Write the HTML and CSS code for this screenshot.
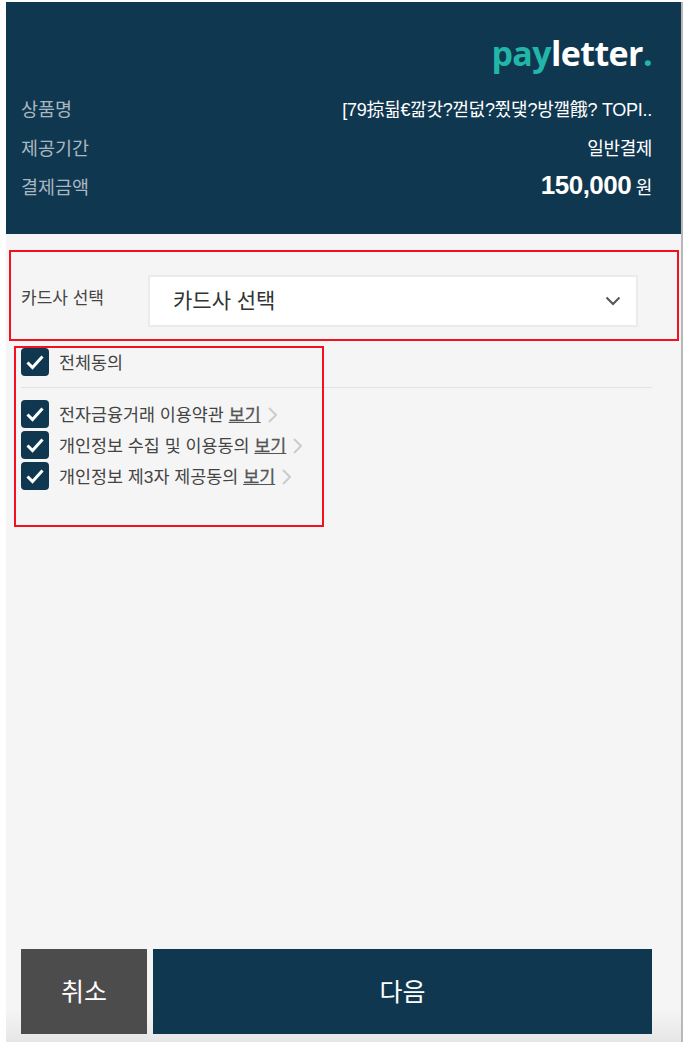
FILE: index.html
```html
<!DOCTYPE html>
<html lang="ko">
<head>
    <meta charset="UTF-8">
    <title>payletter</title>
    <link rel="stylesheet" href="styles.css">
</head>
<body>
<div class="wrap">
    <div class="head">
        <div class="logo"><span class="logo-pay">pay</span>letter<span class="logo-pay">.</span></div>
        <div class="info-row"><span class="info-name">상품명</span><span class="info-value info-long">[79掠뒮€깖캇?껃덦?쮰댗?방깰餓? TOPI..</span></div>
        <div class="info-row"><span class="info-name">제공기간</span><span class="info-value">일반결제</span></div>
        <div class="info-row"><span class="info-name">결제금액</span><span class="info-value"><b class="price">150,000</b> 원</span></div>
    </div>
    <div class="body">
        <div class="card-row">
            <span class="card-label">카드사 선택</span>
            <div class="card-select">
                <span class="card-text">카드사 선택</span>
                <svg class="arrow" width="16" height="10" viewBox="0 0 16 10"><path d="M1.5 1.5 L8 8 L14.5 1.5" fill="none" stroke="#555" stroke-width="2"/></svg>
            </div>
        </div>
        <div class="check-row check-all">
            <svg class="check" viewBox="0 0 28 28"><rect width="28" height="28" rx="4" fill="#103750"/><path d="M6.5 14.5 L11.5 19.5 L21.5 8.5" fill="none" stroke="#fff" stroke-width="3"/></svg>
            <span>전체동의</span>
        </div>
        <div class="terms">
            <div class="check-row">
                <svg class="check" viewBox="0 0 28 28"><rect width="28" height="28" rx="4" fill="#103750"/><path d="M6.5 14.5 L11.5 19.5 L21.5 8.5" fill="none" stroke="#fff" stroke-width="3"/></svg>
                <span>전자금융거래 이용약관 <u class="view">보기</u></span>
                <svg class="more" width="9" height="16" viewBox="0 0 9 16"><path d="M1 1 L8 8 L1 15" fill="none" stroke="#ccc" stroke-width="2"/></svg>
            </div>
            <div class="check-row">
                <svg class="check" viewBox="0 0 28 28"><rect width="28" height="28" rx="4" fill="#103750"/><path d="M6.5 14.5 L11.5 19.5 L21.5 8.5" fill="none" stroke="#fff" stroke-width="3"/></svg>
                <span>개인정보 수집 및 이용동의 <u class="view">보기</u></span>
                <svg class="more" width="9" height="16" viewBox="0 0 9 16"><path d="M1 1 L8 8 L1 15" fill="none" stroke="#ccc" stroke-width="2"/></svg>
            </div>
            <div class="check-row">
                <svg class="check" viewBox="0 0 28 28"><rect width="28" height="28" rx="4" fill="#103750"/><path d="M6.5 14.5 L11.5 19.5 L21.5 8.5" fill="none" stroke="#fff" stroke-width="3"/></svg>
                <span>개인정보 제3자 제공동의 <u class="view">보기</u></span>
                <svg class="more" width="9" height="16" viewBox="0 0 9 16"><path d="M1 1 L8 8 L1 15" fill="none" stroke="#ccc" stroke-width="2"/></svg>
            </div>
        </div>
        <div class="buttons">
            <div class="btn btn-cancel">취소</div>
            <div class="btn btn-next">다음</div>
        </div>
    </div>
    <div class="mark mark-card"></div>
    <div class="mark mark-terms"></div>
</div>
</body>
</html>
```

FILE: styles.css
```css
html, body {
    margin: 0;
    padding: 0;
    background: #fff;
}

body {
    font-family: "Liberation Sans", "Noto Sans CJK KR", sans-serif;
    color: #444;
}

.wrap {
    position: relative;
    width: 677px;
    height: 1040px;
    margin: 2px 0 0 6px;
    display: flex;
    flex-direction: column;
    box-sizing: border-box;
    border-right: 2px solid #b8b8b8;
}

.head {
    height: 232px;
    box-sizing: border-box;
    padding: 33px 29px 0 15px;
    background: #103750;
    color: #fff;
}

.logo {
    height: 53px;
    text-align: right;
    font-family: "Open Sans", sans-serif;
    font-size: 34px;
    line-height: 36px;
    font-weight: 700;
    letter-spacing: -0.6px;
}

.logo-pay {
    color: #22b6a8;
}

.info-row {
    display: flex;
    justify-content: space-between;
    align-items: center;
    height: 39px;
    font-size: 18px;
}

.info-name {
    color: #a9b7c1;
    font-size: 18.5px;
}

.info-value {
    letter-spacing: -0.4px;
}

.info-long {
    letter-spacing: -0.27px;
}

.price {
    font-size: 26px;
    letter-spacing: -0.5px;
}

.body {
    flex: 1;
    display: flex;
    flex-direction: column;
    padding: 0 29px 0 15px;
    background: linear-gradient(#f5f5f5 96%, #e6e6e6);
}

.card-row {
    display: flex;
    align-items: center;
    margin-top: 41px;
    height: 52px;
}

.card-label {
    width: 127px;
    font-size: 17px;
    position: relative;
    top: -5px;
}

.card-select {
    display: flex;
    justify-content: space-between;
    align-items: center;
    box-sizing: border-box;
    width: 490px;
    height: 52px;
    padding: 0 15px 0 23px;
    background: #fff;
    border: 2px solid #ebebeb;
    font-size: 21px;
    color: #333;
}

.card-text {
    padding-bottom: 5px;
}

.check-row {
    display: flex;
    align-items: center;
    height: 31px;
    font-size: 17.4px;
}

.check {
    width: 28px;
    height: 28px;
    margin-right: 10px;
    flex-shrink: 0;
}

.check-all {
    margin-top: 19px;
    padding-bottom: 10px;
    border-bottom: 1px solid #e2e2e2;
}

.terms {
    margin-top: 10px;
}

.view {
    color: #555;
    -webkit-text-stroke: 0.3px #555;
}

.more {
    margin-left: 7px;
    position: relative;
    top: 1px;
}

.buttons {
    display: flex;
    gap: 6px;
    margin-top: auto;
    margin-bottom: 8px;
}

.btn {
    height: 85px;
    line-height: 87px;
    text-align: center;
    color: #fff;
    font-size: 25px;
}

.btn-cancel {
    width: 126px;
    background: #4c4c4c;
}

.btn-next {
    flex: 1;
    background: #103750;
}

.mark {
    position: absolute;
    box-sizing: border-box;
    border: 2px solid #f5101f;
}

.mark-card {
    left: 3px;
    top: 248px;
    width: 670px;
    height: 91px;
}

.mark-terms {
    left: 8px;
    top: 344px;
    width: 310px;
    height: 181px;
}
```
